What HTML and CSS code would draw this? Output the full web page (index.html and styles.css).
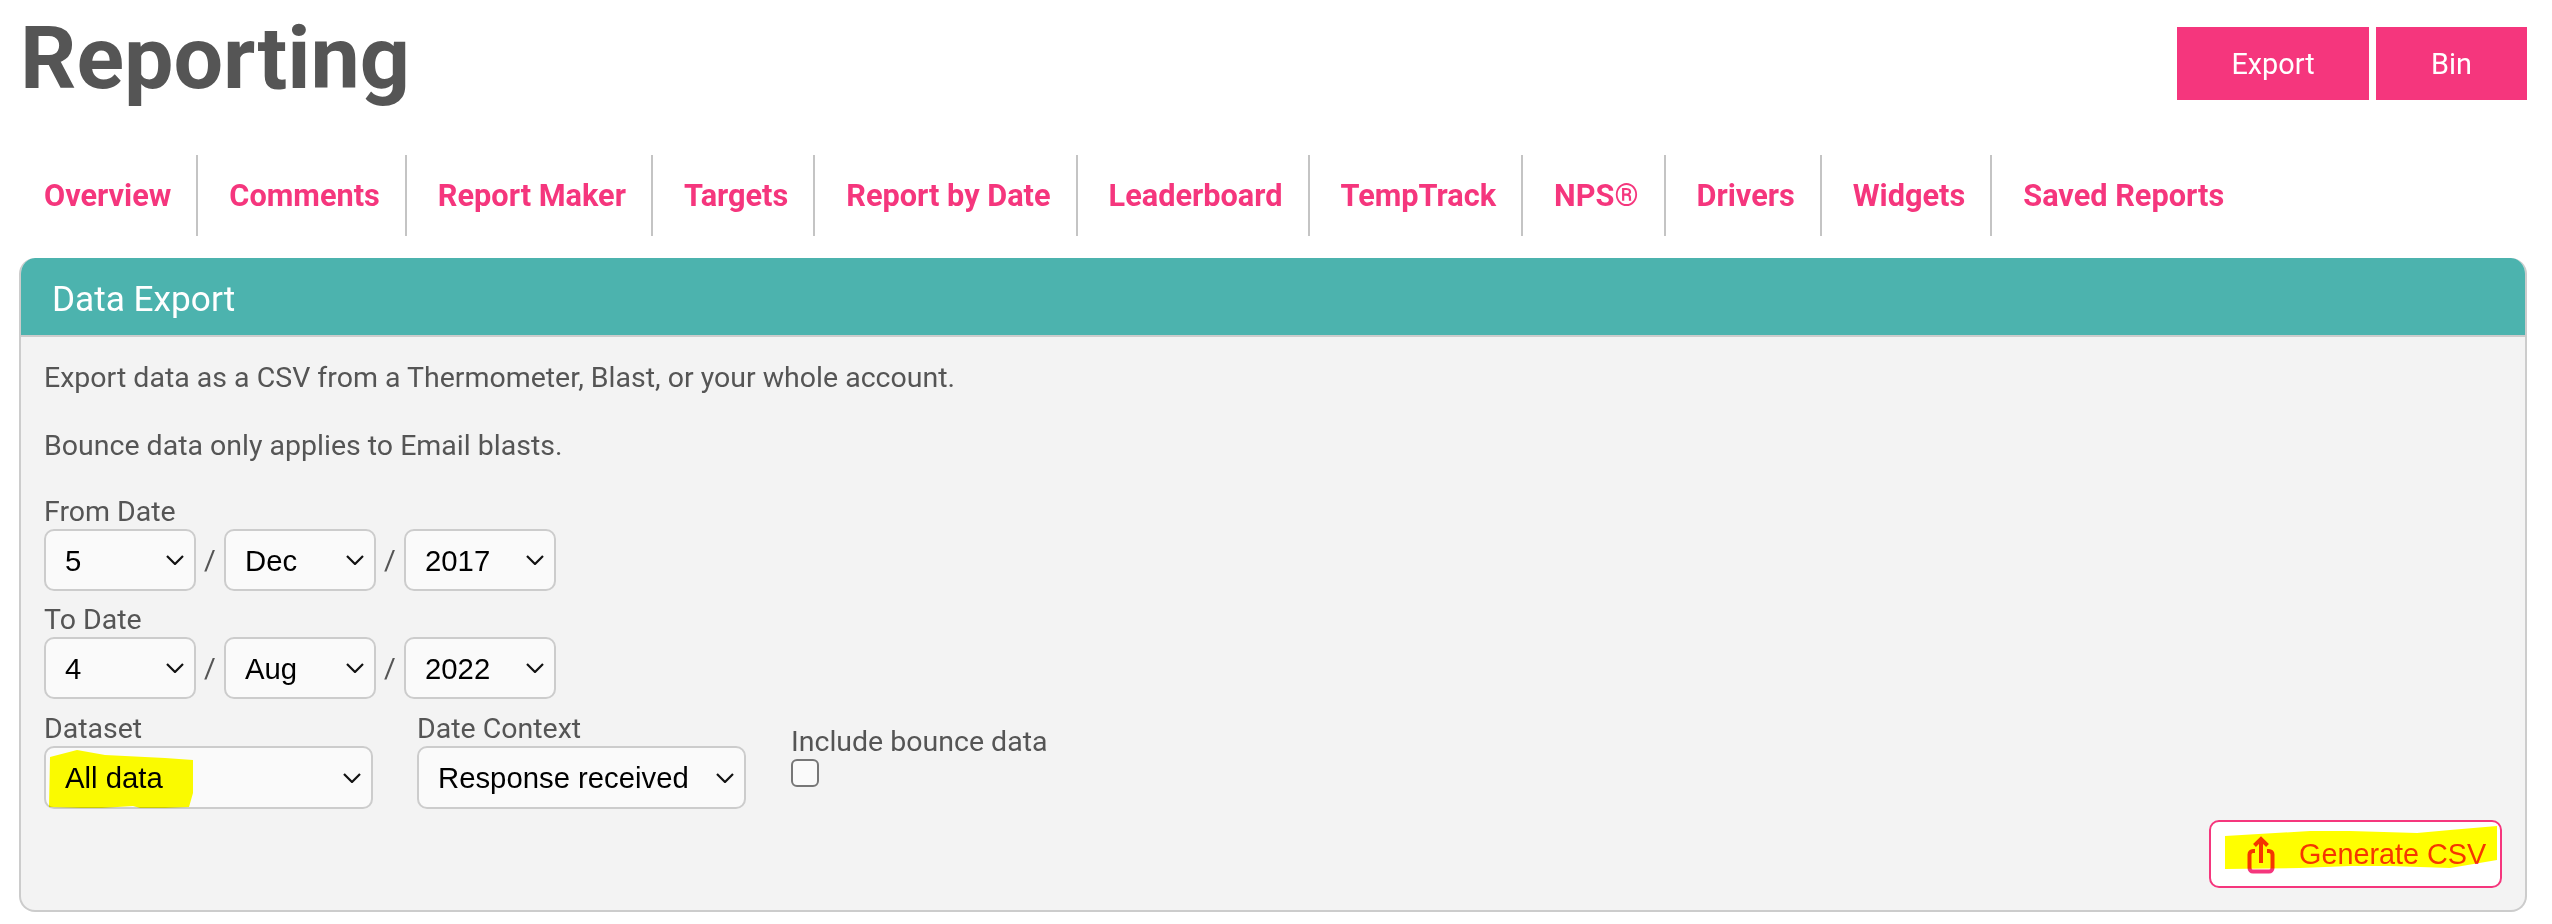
FILE: index.html
```html
<!DOCTYPE html>
<html lang="en">
<head>
<meta charset="utf-8">
<title>Reporting</title>
<link rel="stylesheet" href="styles.css">
</head>
<body>
<div class="page">
  <header class="top">
    <h1 class="title">Reporting</h1>
    <div class="actions">
      <a class="action action-export">Export</a>
      <a class="action action-bin">Bin</a>
    </div>
  </header>
  <nav class="tabs">
    <a class="tab">Overview</a>
    <a class="tab">Comments</a>
    <a class="tab">Report Maker</a>
    <a class="tab">Targets</a>
    <a class="tab">Report by Date</a>
    <a class="tab">Leaderboard</a>
    <a class="tab">TempTrack</a>
    <a class="tab">NPS®</a>
    <a class="tab">Drivers</a>
    <a class="tab">Widgets</a>
    <a class="tab">Saved Reports</a>
  </nav>
  <section class="panel">
    <h2 class="panel-head">Data Export</h2>
    <div class="panel-body">
      <p class="copy">Export data as a CSV from a Thermometer, Blast, or your whole account.</p>
      <p class="copy">Bounce data only applies to Email blasts.</p>
      <label class="label first">From Date</label>
      <div class="date-row">
        <select class="sel small"><option>5</option></select>
        <span class="slash">/</span>
        <select class="sel small"><option>Dec</option></select>
        <span class="slash">/</span>
        <select class="sel small"><option>2017</option></select>
      </div>
      <label class="label">To Date</label>
      <div class="date-row">
        <select class="sel small"><option>4</option></select>
        <span class="slash">/</span>
        <select class="sel small"><option>Aug</option></select>
        <span class="slash">/</span>
        <select class="sel small"><option>2022</option></select>
      </div>
      <div class="fields">
        <div class="field">
          <label class="label">Dataset</label>
          <select class="sel wide"><option>All data</option></select>
        </div>
        <div class="field">
          <label class="label">Date Context</label>
          <select class="sel wide"><option>Response received</option></select>
        </div>
        <div class="field field-check">
          <label class="label">Include bounce data</label>
          <span class="check"></span>
        </div>
      </div>
      <div class="foot">
        <button class="generate" type="button">
          <svg class="gen-icon" width="28" height="38" viewBox="0 0 28 38" fill="none" stroke="#f5367d" stroke-width="4">
            <path d="M8 15H6a3.500 3.500 0 0 0-3.500 3.500V32a3.500 3.500 0 0 0 3.500 3.500H22a3.500 3.500 0 0 0 3.500-3.500V18.500A3.500 3.500 0 0 0 22 15h-2"/>
            <path d="M14 27V3M7.500 9.500 14 3l6.500 6.500"/>
          </svg>
          <span>Generate CSV</span>
        </button>
      </div>
    </div>
  </section>
</div>
<svg class="marker" width="2552" height="924" viewBox="0 0 2552 924">
  <polygon points="50,757 77,750 105,755 165,758 193,760 193,793 189,807 165,808 140,808 133,806 102,808 81,808 49,807"/>
  <polygon points="2225,836 2310,831 2350,831 2417,833 2450,830 2497,826 2497,860 2450,868 2390,866 2350,866 2300,868 2225,869"/>
</svg>
</body>
</html>
```
FILE: styles.css
```css
* { box-sizing: border-box; }
html, body { margin: 0; padding: 0; background: #fff; }
body { font-family: Roboto, sans-serif; color: #555; width: 2552px; height: 924px; overflow: hidden; position: relative; }
.page { padding: 0 25px 0 19px; }
.top { display: flex; justify-content: space-between; align-items: flex-start; height: 155px; }
.title { margin: 6px 0 0 1px; font-size: 88px; line-height: 104px; font-weight: 700; color: #555; }
.actions { display: flex; gap: 7px; padding-top: 27px; }
.action { display: flex; align-items: center; justify-content: center; height: 73px; background: #f5367d; color: #fff; font-size: 28.8px; }
.action-export { width: 192px; }
.action-bin { width: 151px; }
.tabs { display: flex; height: 81px; align-items: center; }
.tab { height: 81px; line-height: 81px; padding: 0 25px 0 31px; border-right: 2px solid #c4c4c4; color: #f5367d; font-size: 30.7px; font-weight: 700; white-space: nowrap; }
.tab:first-child { padding-left: 25px; }
.tab:last-child { border-right: 0; }
.panel { margin-top: 22px; height: 654px; border: 2px solid #ccc; border-top: 0; border-radius: 16px; background: #f3f3f3; overflow: hidden; display: flex; flex-direction: column; }
.panel-head { margin: 0 -2px; height: 79px; padding: 5px 0 0 33px; display: flex; align-items: center; background: #4cb3ae; border-bottom: 2px solid #ccc; color: #fff; font-size: 35.2px; font-weight: 400; border-radius: 16px 16px 0 0; }
.panel-body { padding: 24px 23px 0; flex: 1; display: flex; flex-direction: column; }
.copy { margin: 0 0 34px; font-size: 28.5px; line-height: 34px; color: #555; }
.label { display: block; font-size: 28.5px; line-height: 34px; color: #555; height: 34px; }
.label.first { margin-top: -2px; }
.date-row { display: flex; align-items: center; height: 62px; margin-bottom: 12px; }
.sel { height: 62px; appearance: none; border: 2px solid #ccc; border-radius: 10px; background-color: #fafafa; background-image: url("data:image/svg+xml,%3Csvg xmlns='http://www.w3.org/2000/svg' width='18' height='10' viewBox='0 0 18 10'%3E%3Cpath d='M1 1l8 8 8-8' fill='none' stroke='%23111' stroke-width='2.200'/%3E%3C/svg%3E"); background-repeat: no-repeat; background-position: right 10px center; color: #000; font-family: "Liberation Sans", sans-serif; font-size: 29.3px; padding: 0 0 0 19px; }
.small { width: 152px; }
.slash { width: 28px; text-align: center; font-size: 28.5px; color: #555; }
.wide { width: 329px; height: 63px; }
.fields { display: flex; gap: 44px; margin-top: 1px; }
.field { display: flex; flex-direction: column; }
.field-check { padding-top: 13px; margin-left: 1px; }
.check { display: block; width: 28px; height: 28px; background: #fafafa; border: 2px solid #777; border-radius: 6px; }
.foot { margin-top: 11px; display: flex; justify-content: flex-end; }
.generate { width: 293px; height: 68px; display: flex; align-items: center; gap: 24px; padding: 0 0 0 36px; background: #fff; border: 2px solid #f5367d; border-radius: 10px; color: #f5367d; font-family: "Liberation Sans", sans-serif; font-size: 28.8px; }
.gen-icon { flex: none; margin-top: 2px; }
.marker { position: absolute; left: 0; top: 0; mix-blend-mode: multiply; pointer-events: none; }
.marker polygon { fill: #ffff00; }
```
